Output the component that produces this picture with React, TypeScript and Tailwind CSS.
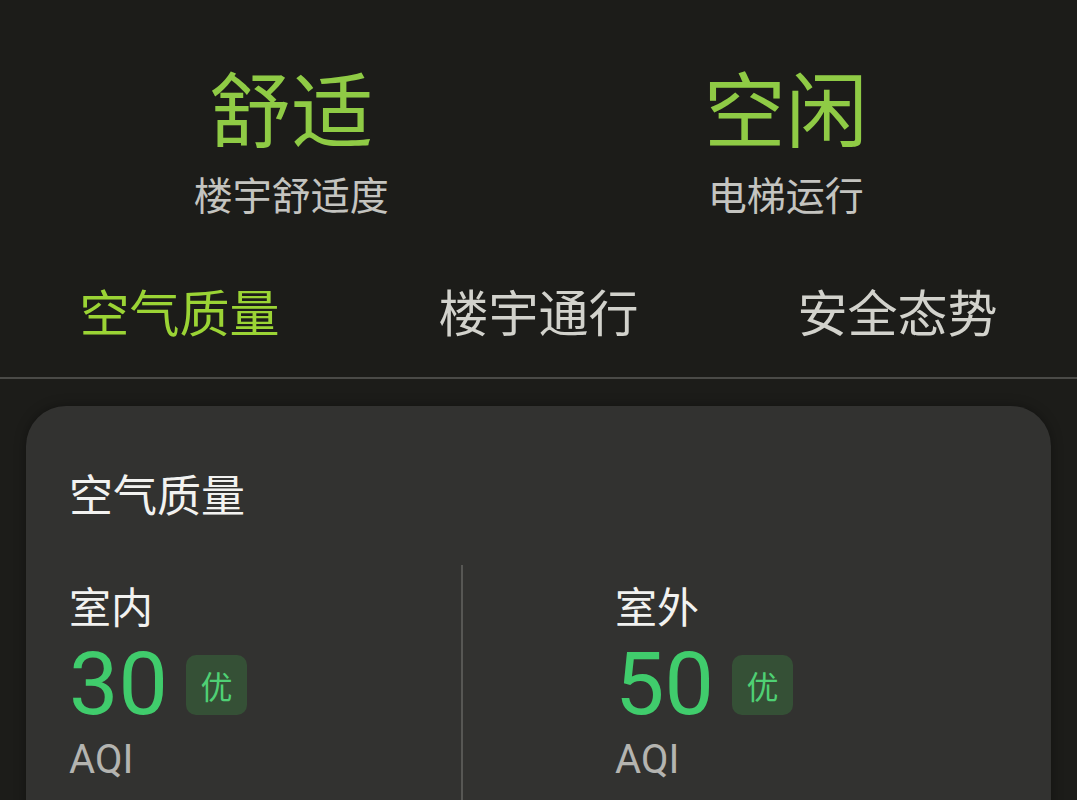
import React from 'react'

const cjk = { fontFamily: '"Noto Sans CJK SC", "Noto Sans", sans-serif' }
const num = { fontFamily: 'Roboto, "Noto Sans CJK SC", sans-serif' }

const stats = [
  { value: '舒适', label: '楼宇舒适度' },
  { value: '空闲', label: '电梯运行' },
]

const tabs = ['空气质量', '楼宇通行', '安全态势']

const readings = [
  { name: '室内', aqi: 30, level: '优' },
  { name: '室外', aqi: 50, level: '优' },
]

function Reading({ name, aqi, level }: { name: string; aqi: number; level: string }) {
  return (
    <div className="flex flex-col">
      <div className="text-[42px] leading-[42px] text-[#f2f2f0]" style={cjk}>{name}</div>
      <div className="flex items-center mt-[20px] gap-[18px]">
        <span className="text-[88px] leading-[76px] text-[#40cc6c]" style={num}>{aqi}</span>
        <span
          className="w-[61px] h-[60px] mt-[2px] rounded-[10px] bg-[#355036] text-[#4fd074] text-[32px] flex items-center justify-center"
          style={cjk}
        >
          {level}
        </span>
      </div>
      <div className="text-[40px] leading-[40px] mt-[18px] text-[#b4b4b0]" style={num}>AQI</div>
    </div>
  )
}

export default function App() {
  return (
    <div className="w-[1077px] h-[800px] overflow-hidden bg-[#1c1c19]" style={cjk}>
      {/* summary */}
      <div className="grid grid-cols-2 px-[44px] pt-[65px]">
        {stats.map(s => (
          <div key={s.label} className="flex flex-col items-center">
            <div className="text-[82px] leading-[82px] text-[#8fcb45]">{s.value}</div>
            <div className="text-[39px] leading-[39px] mt-[27px] text-[#c4c4c0]">{s.label}</div>
          </div>
        ))}
      </div>

      {/* tabs */}
      <div className="grid grid-cols-3 mt-[72px] pb-[42px] border-b-2 border-[#4a4a47]">
        {tabs.map((t, i) => (
          <div
            key={t}
            className={`text-center text-[50px] leading-[50px] ${i === 0 ? 'text-[#9bd435]' : 'text-[#d2d2cc]'}`}
          >
            {t}
          </div>
        ))}
      </div>

      {/* air quality card */}
      <div className="mx-[26px] mt-[27px] rounded-[40px] bg-[#323230] shadow-[0_0_12px_rgba(0,0,0,0.35)] px-[43px] pt-[65px]">
        <div className="text-[44px] leading-[44px] text-[#f2f2f0]">空气质量</div>
        <div className="flex mt-[50px]">
          <div className="w-[392px] pt-[19px] pb-[80px]">
            <Reading {...readings[0]} />
          </div>
          <div className="w-[2px] bg-[#575754] self-stretch" />
          <div className="pl-[152px] pt-[19px] pb-[80px]">
            <Reading {...readings[1]} />
          </div>
        </div>
      </div>
    </div>
  )
}
